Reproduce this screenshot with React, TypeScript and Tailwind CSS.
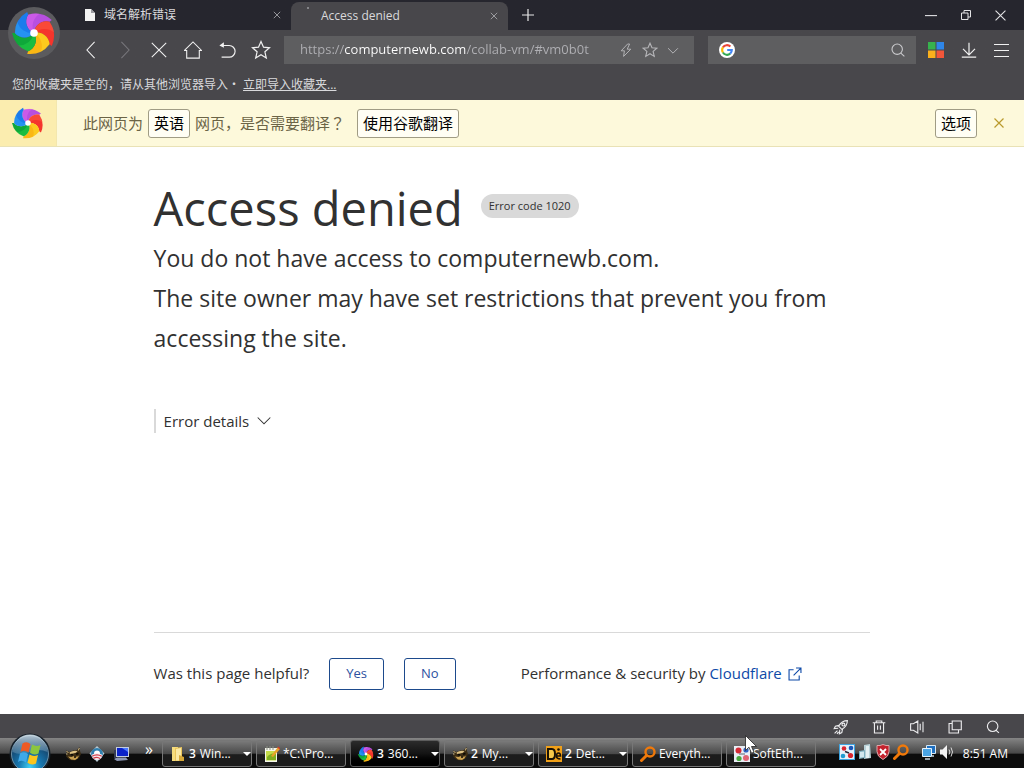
import { useState, type ReactNode } from "react";

const BLADES = [
  { angle: -108, color: "#b84fe0", light: "#ea6cf5" },
  { angle: -36, color: "#f5352c", light: "#ff6a4a" },
  { angle: 36, color: "#fab714", light: "#ffe62e" },
  { angle: 108, color: "#0fa83a", light: "#2bdc4a" },
  { angle: 180, color: "#1a7cec", light: "#38b4fa" },
];

function rim(angle: number, radius = 22) {
  const a = (angle * Math.PI) / 180;
  return `${(Math.cos(a) * radius).toFixed(2)} ${(Math.sin(a) * radius).toFixed(2)}`;
}

function Pinwheel({ className }: { className: string }) {
  return (
    <svg viewBox="-23 -23 46 46" className={className} aria-hidden="true">
      {BLADES.map((b) => (
        <g key={b.angle}>
          <path
            fill={b.color}
            d={`M0 0A13 13 0 0 1 ${rim(b.angle, 20)}A26 26 0 0 1 ${rim(b.angle + 72, 23)}L${rim(b.angle + 72, 20)}A13 13 0 0 0 0 0Z`}
          />
          <path
            fill={b.light}
            opacity="0.4"
            d={`M0 0A13 13 0 0 1 ${rim(b.angle, 20)}A26 26 0 0 1 ${rim(b.angle + 34, 21)}A16 16 0 0 0 0 0Z`}
          />
        </g>
      ))}
      <circle r="4" fill="#fff" />
    </svg>
  );
}

function Line({
  d,
  className = "size-[18px]",
  width = 1.2,
  children,
}: {
  d: string;
  className?: string;
  width?: number;
  children?: ReactNode;
}) {
  return (
    <svg
      viewBox="0 0 20 20"
      className={className}
      fill="none"
      stroke="currentColor"
      strokeWidth={width}
      aria-hidden="true"
    >
      <path d={d} />
      {children}
    </svg>
  );
}

const STAR = "M10 1.5l2.5 5.7 6 .6-4.6 4 1.4 6.2-5.3-3.3L4.7 18l1.4-6.2-4.6-4 6-.6z";
const CROSS = "M2 2l16 16M18 2l-16 16";

function GoogleG() {
  return (
    <svg viewBox="0 0 16 16" className="size-4 shrink-0" aria-hidden="true">
      <circle cx="8" cy="8" r="8" fill="#fff" />
      <g fill="none" strokeWidth="2.1">
        <path d="M3.9 5.4A4.8 4.8 0 0 1 11.4 4.6" stroke="#ea4335" />
        <path d="M3.9 10.5A4.8 4.8 0 0 1 3.9 5.4" stroke="#fbbc05" />
        <path d="M11.2 11.6A4.8 4.8 0 0 1 3.9 10.5" stroke="#34a853" />
        <path d="M8.2 8H12.8A4.8 4.8 0 0 1 11.2 11.6" stroke="#4285f4" />
      </g>
    </svg>
  );
}

function Raccoon() {
  return (
    <svg viewBox="0 0 16 16" className="size-4 shrink-0" aria-hidden="true">
      <path d="M1 4.500l3.500 1.500 4-1.500 3.500-.5L14.500 1l.5 4 1 3-2 4-4 2.500-5-.5-3-2.500L1 10l1-2z" fill="#3b2c14" />
      <path d="M4.500 6.500Q8 4 12.500 5l-1.500 1.800-3 .7-3 .8z" fill="#dcc184" />
      <path d="M3 10.500l3.500.5L9 10l3 .8 2-1.300-1.500 3L10 14l-4-.5z" fill="#c9a050" />
      <path d="M5.500 8.500l2.500.3M11 8.300l2.500-.8" stroke="#0c0904" strokeWidth="1.700" />
      <path d="M1.500 5l2 2M14.300 2l-1 2.500M1 8h1.500" stroke="#e6cf97" strokeWidth="0.900" />
      <circle cx="10" cy="11" r="1" fill="#0c0904" />
    </svg>
  );
}

function ShieldO() {
  return (
    <svg viewBox="0 0 16 16" className="size-4 shrink-0" aria-hidden="true">
      <path d="M8 0l7.5 7.5L8 16 .5 7.5z" fill="#b9cbd6" />
      <circle cx="8" cy="8" r="6" fill="#2f7fae" />
      <circle cx="8" cy="7.4" r="3" fill="#fff" />
      <path d="M2.300 9Q8 5.500 13.700 9 12.500 14 8 14T2.300 9" fill="#f8ecec" />
      <path d="M3 10.300q5-3 9.800 0M4.300 12.400q4-2.200 7 .4" fill="none" stroke="#cf3d4b" strokeWidth="1.200" />
    </svg>
  );
}

function BlueScreen() {
  return (
    <svg viewBox="0 0 16 16" className="size-4 shrink-0" aria-hidden="true">
      <path d="M3 1h13v10H3z" fill="#c3cce0" />
      <path d="M4 2h11v8H4z" fill="#0a22c8" />
      <path d="M9 2h6v4z" fill="#4a78ff" />
      <path d="M1 13l3-1.500h9l2 2.500-11 1z" fill="#8b96b4" />
      <path d="M1 4h2v8H1z" fill="#343b52" />
    </svg>
  );
}

function FolderIcon() {
  return (
    <svg viewBox="0 0 16 16" className="size-4 shrink-0" aria-hidden="true">
      <path d="M2 1h6v14H2z" fill="#f6dc7d" />
      <path d="M5 2l7-1v14H5z" fill="#e9c45a" />
      <path d="M6 3l5-1v12.500H6z" fill="#fbe9a4" />
      <path d="M9 9l5 2v4H9z" fill="#d7a93a" />
    </svg>
  );
}

function Notepad() {
  return (
    <svg viewBox="0 0 16 16" className="size-4 shrink-0" aria-hidden="true">
      <path d="M1 2h12v14H1z" fill="#f4f6ec" />
      <path d="M2 5h10v9.500H2z" fill="#c4dc4a" />
      <path d="M3 11q4-5 9-3v6H3z" fill="#7fae22" />
      <path d="M3 0v4M6 0v4M9 0v4" stroke="#8a8f83" />
      <path d="M7 10l7-9 2 2-7 8z" fill="#e8a22a" />
      <path d="M14 1l2 2" stroke="#d0392b" strokeWidth="1.500" />
    </svg>
  );
}

function DetectIcon() {
  return (
    <svg viewBox="0 0 16 16" className="size-4 shrink-0" aria-hidden="true">
      <path d="M0 0h16v16H0z" fill="#f0a018" />
      <path d="M2 3h4q3 0 3 5t-3 5H2z" fill="#f7c94b" stroke="#1a1205" strokeWidth="2" />
      <path d="M10 10h4.500q0-3-2-3t-2 3q0 3 4 3" fill="none" stroke="#1a1205" strokeWidth="1.600" />
      <circle cx="12.500" cy="3.500" r="1.300" fill="#1a1205" />
    </svg>
  );
}

function OrangeSearch() {
  return (
    <svg viewBox="0 0 16 16" className="size-4 shrink-0" fill="none" stroke="#f0790a" aria-hidden="true">
      <circle cx="10" cy="6" r="4.500" strokeWidth="2.400" />
      <path d="M6.500 9.500L1.500 14.500" strokeWidth="3" strokeLinecap="round" />
    </svg>
  );
}

function SoftEther() {
  return (
    <svg viewBox="0 0 16 16" className="size-4 shrink-0" aria-hidden="true">
      <path d="M0 0h16v16H0z" fill="#e9eef5" />
      <circle cx="4.500" cy="4.500" r="3" fill="#d42a35" />
      <circle cx="12" cy="4" r="2.600" fill="#2f62c4" />
      <circle cx="5" cy="12.500" r="2.600" fill="#47a83c" />
      <circle cx="12" cy="12" r="3" fill="#e06474" />
      <path d="M5 8h6" stroke="#5b6473" />
    </svg>
  );
}

function SoftEtherTray() {
  return (
    <svg viewBox="0 0 16 16" className="size-4 shrink-0" aria-hidden="true">
      <path d="M0 0h16v16H0z" fill="#3fa4e0" />
      <path d="M1 1h14v14H1z" fill="#e4f0fa" />
      <circle cx="5" cy="4.500" r="2.300" fill="#d9252f" />
      <circle cx="12" cy="4" r="2.300" fill="#1b57b8" />
      <circle cx="4" cy="12" r="2.300" fill="#1e9ad0" />
      <circle cx="11.500" cy="11.500" r="2.600" fill="#d9252f" />
      <path d="M6 7.500l4 1.500" stroke="#223" strokeWidth="1.500" />
    </svg>
  );
}

function ServerTray() {
  return (
    <svg viewBox="0 0 16 16" className="size-4 shrink-0" aria-hidden="true">
      <path d="M7 1l6-1 1 14-7 1z" fill="#b9d2d8" />
      <path d="M9 2h3v12H9z" fill="#e6f1f3" />
      <path d="M2 7l6-1v8l-6 1z" fill="#7fb0c0" />
      <path d="M3 8l4-.5V13l-4 .8z" fill="#d3e8ee" />
    </svg>
  );
}

function ShieldX() {
  return (
    <svg viewBox="0 0 16 16" className="size-4 shrink-0" aria-hidden="true">
      <path d="M8 .5q3 1.500 6 1v6q0 5-6 8-6-3-6-8v-6q3 .5 6-1z" fill="#c4222d" stroke="#dca8aa" />
      <path d="M5 5l6 6M11 5l-6 6" stroke="#fff" strokeWidth="1.800" />
    </svg>
  );
}

function NetworkTray() {
  return (
    <svg viewBox="0 0 16 16" className="size-4 shrink-0" aria-hidden="true">
      <path d="M5.500 1.500h9v8h-9z" fill="#1e6fc0" stroke="#d7e8f5" />
      <path d="M1.500 4.500h9v8h-9z" fill="#4aa5e6" stroke="#e6f2fb" />
      <path d="M4 15h5M12 11v2" stroke="#c3d3df" strokeWidth="1.500" />
    </svg>
  );
}

function VolumeTray() {
  return (
    <svg viewBox="0 0 16 16" className="size-4 shrink-0" aria-hidden="true">
      <path d="M1 5.500h2.500L8 1v14l-4.500-4.500H1z" fill="#f2f2f2" />
      <path d="M10 5.500q1.800 2.500 0 5M12 3.500q3 4.500 0 9" fill="none" stroke="#ddd" />
    </svg>
  );
}

function StartOrb() {
  return (
    <svg viewBox="0 0 42 42" className="size-[42px] shrink-0" aria-hidden="true">
      <defs>
        <radialGradient id="orb" cx="50%" cy="85%" r="75%">
          <stop offset="0" stopColor="#3fd0f5" />
          <stop offset="0.4" stopColor="#1878b0" />
          <stop offset="1" stopColor="#14375a" />
        </radialGradient>
        <linearGradient id="gloss" x1="0" y1="0" x2="0" y2="1">
          <stop offset="0" stopColor="#e6f1f7" stopOpacity="0.8" />
          <stop offset="1" stopColor="#8fb4cc" stopOpacity="0.3" />
        </linearGradient>
      </defs>
      <circle cx="21" cy="21" r="20.500" fill="#16202a" />
      <circle cx="21" cy="21" r="18.500" fill="url(#orb)" stroke="#7fa6bd" strokeWidth="0.800" />
      <path d="M3.500 19a17.500 17.500 0 0 1 35 0q-9-4-18 0t-17 0z" fill="url(#gloss)" />
      <path d="M13.500 10.500q4.500-2.500 8 .5l-2 8.500q-4-3-8-.5z" fill="#ee5a24" />
      <path d="M23 11.500q4 2.500 8.500.5l-2 8.500q-4.500 2.200-8.500-.7z" fill="#8cc63f" />
      <path d="M11 20.500q4.500-2.500 8 .5l-2 8.500q-4-3-8-.5z" fill="#3fa9ea" />
      <path d="M20.500 21.500q4 2.500 8.500.5l-2 8.500q-4.500 2.200-8.500-.7z" fill="#fcc51c" />
    </svg>
  );
}

type Task = { icon: ReactNode; count?: string; label: string; menu?: boolean; active?: boolean };

const TASKS: Task[] = [
  { icon: <FolderIcon />, count: "3", label: "Win...", menu: true },
  { icon: <Notepad />, label: "*C:\\Pro..." },
  { icon: <Pinwheel className="size-4 shrink-0" />, count: "3", label: "360...", menu: true, active: true },
  { icon: <Raccoon />, count: "2", label: "My...", menu: true },
  { icon: <DetectIcon />, count: "2", label: "Det...", menu: true },
  { icon: <OrangeSearch />, label: "Everyth..." },
  { icon: <SoftEther />, label: "SoftEth..." },
];

function TaskButton({ task }: { task: Task }) {
  return (
    <button
      className={
        "flex h-[27px] w-[90px] shrink-0 items-center gap-[3px] rounded-[3px] border pl-[7px] text-left text-[12px] text-white " +
        (task.active
          ? "border-[#5c5c5c] bg-linear-to-b from-[#2c2c2c] via-[#141414] to-black"
          : "border-[#777] bg-linear-to-b from-[#7a7a7a] from-0% via-[#4a4a4a] via-50% to-[#1c1c1c] to-55%")
      }
    >
      {task.icon}
      <span className="flex flex-1 gap-1 whitespace-nowrap">
        {task.count && <b className="font-semibold">{task.count}</b>}
        <span>{task.label}</span>
      </span>
      {task.menu && (
        <svg viewBox="0 0 8 4" className="h-1 w-2 shrink-0" fill="#fff" aria-hidden="true">
          <path d="M0 0h8L4 4z" />
        </svg>
      )}
    </button>
  );
}

function Header() {
  const [url, setUrl] = useState("https://computernewb.com/collab-vm/#vm0b0t");
  const navButton = "flex w-[34px] justify-center text-[#f1f1f1]";
  return (
    <header className="bg-[#48474b] text-[#d9d9dc]">
      <div className="flex bg-linear-to-b from-[#26262e] from-[30px] to-[#48474b] to-[30px]">
        <div className="flex w-[72px] shrink-0 items-start pt-[7px] pl-2">
          <button aria-label="360 account" className="rounded-full bg-[#5b5b5e] p-1">
            <Pinwheel className="size-11" />
          </button>
        </div>
        <div className="min-w-0 flex-1">
          <div className="flex h-[30px] items-center text-[12px]">
            <div className="flex h-full w-[219px] items-center pl-3">
              <svg viewBox="0 0 12 14" className="h-3.5 w-3" aria-hidden="true">
                <path d="M1 1h6l4 4v8H1z" fill="#f2f2f2" />
                <path d="M7 1v4h4z" fill="#9a9aa0" />
              </svg>
              <span className="flex-1 pl-2">域名解析错误</span>
              <button aria-label="Close 域名解析错误" className="mr-2.5 text-[#9a9a9f]">
                <Line d={CROSS} className="size-2" width={2.4} />
              </button>
            </div>
            <div className="flex h-[28px] w-[217px] items-center self-end rounded-t-lg bg-[#48474b]">
              <span className="mb-4 ml-4 size-0.5 rounded-full bg-[#99999c]" />
              <span className="flex-1 pl-3">Access denied</span>
              <button aria-label="Close Access denied" className="mr-2.5 text-[#9f9fa3]">
                <Line d={CROSS} className="size-2" width={2.4} />
              </button>
            </div>
            <button aria-label="New tab" className="ml-3.5 text-[#e8e8e8]">
              <Line d="M10 0v20M0 10h20" className="size-3" width={2} />
            </button>
            <div className="mr-[18px] ml-auto flex items-center gap-6 text-[#e4e4e6]">
              <button aria-label="Minimize">
                <Line d="M0 11h20" className="size-3" width={1.8} />
              </button>
              <button aria-label="Restore">
                <Line d="M1 6h13v13H1zM6 6V1h13v13h-5" className="size-2.5" width={2} />
              </button>
              <button aria-label="Close">
                <Line d="M1 1l18 18M19 1L1 19" className="size-[11px]" width={2} />
              </button>
            </div>
          </div>
          <div className="flex h-10 items-center pl-0.5">
            <button aria-label="Back" className={navButton}>
              <Line d="M14 1L5.500 10l8.500 9" />
            </button>
            <button aria-label="Forward" className="flex w-[34px] justify-center text-[#77767b]">
              <Line d="M6 1l8.500 9L6 19" />
            </button>
            <button aria-label="Stop" className={navButton}>
              <Line d={CROSS} />
            </button>
            <button aria-label="Home" className={navButton}>
              <Line d="M.5 10.500L10 1l9.500 9.500H17V19H3v-8.500z" />
            </button>
            <button aria-label="Undo" className={navButton}>
              <Line d="M4 18h8.500a6.500 6.500 0 0 0 0-13H3" width={1.3}>
                <path d="M6.500 1.500L1.500 5l5 2.500z" fill="currentColor" stroke="none" />
              </Line>
            </button>
            <button aria-label="Favourite" className={navButton}>
              <Line d={STAR} className="size-5" />
            </button>
            <div className="ml-1.5 flex h-7 min-w-0 flex-1 items-center gap-2 bg-[#5e5e60] pr-3.5 pl-4 text-[#b5b5b8]">
              <input
                aria-label="Address"
                value={url}
                onChange={(e) => setUrl(e.target.value)}
                className="min-w-0 flex-1 bg-[linear-gradient(to_right,#b0b0b4_44px,#fff_44px,#fff_166px,#b0b0b4_166px)] bg-clip-text text-[13px] text-transparent caret-white outline-none"
              />
              <button aria-label="Speed mode">
                <Line d="M12 2.500L4 11h4l-1 7 9-9h-4.500l3-6.500z" className="size-4" />
              </button>
              <button aria-label="Add to favourites">
                <Line d={STAR} className="size-4" width={1.4} />
              </button>
              <button aria-label="Address history">
                <Line d="M3 7.500l7 7 7-7" className="size-3.5" width={1.4} />
              </button>
            </div>
            <div className="ml-3.5 flex h-7 w-[208px] items-center bg-[#5e5e60] pr-2.5 pl-[11px]">
              <GoogleG />
              <input aria-label="Search" className="min-w-0 flex-1 px-2 text-[13px] outline-none" />
              <button aria-label="Search the web" className="text-[#c9c9cc]">
                <Line d="M13.500 14L18 18" className="size-4" width={1.4}>
                  <circle cx="9" cy="9" r="6.500" />
                </Line>
              </button>
            </div>
            <div className="mr-[15px] ml-3 flex items-center gap-[17px] text-[#f1f1f1]">
              <button aria-label="Apps">
                <svg viewBox="0 0 16 16" className="size-4" aria-hidden="true">
                  <path d="M0 0h7.500v7.500H0z" fill="#37b24d" />
                  <path d="M8.500 0H16v7.500H8.500z" fill="#2f86e8" />
                  <path d="M0 8.500h7.500V16H0z" fill="#fbb01c" />
                  <path d="M8.500 8.500H16V16H8.500z" fill="#f2563a" />
                </svg>
              </button>
              <button aria-label="Downloads">
                <Line d="M10 1v14M2.500 8.500L10 16l7.500-7.500M1 19h18" className="size-4" width={1.5} />
              </button>
              <button aria-label="Menu">
                <Line d="M0 2h20M0 10h20M0 18h20" className="size-[15px]" width={1.5} />
              </button>
            </div>
          </div>
        </div>
      </div>
      <div className="flex h-[30px] items-center gap-[3px] px-3 text-[12px]">
        <span>您的收藏夹是空的，请从其他浏览器导入・</span>
        <a href="#import" className="underline">
          立即导入收藏夹...
        </a>
      </div>
    </header>
  );
}

function TranslateBar() {
  const button = "h-[29px] rounded-[3px] border border-[#a09c84] bg-[#fffef4] px-[5px] text-black";
  return (
    <section className="flex h-[47px] items-center border-b border-[#e9e2b6] bg-[#fdf9db] text-[15px] text-[#6b6446]">
      <div className="flex h-full w-[57px] items-center justify-center border-r border-[#f3e7ae] bg-[#fbedaf]">
        <Pinwheel className="size-8" />
      </div>
      <div className="flex flex-1 items-center gap-[5px] pl-[26px]">
        <span>此网页为</span>
        <button className={button}>英语</button>
        <span>
          网页，是否需要翻译<span className="font-['Noto_Sans_CJK_TC',sans-serif]">？</span>
        </span>
        <button className={button + " ml-[7px]"}>使用谷歌翻译</button>
      </div>
      <button className={button}>选项</button>
      <button aria-label="Dismiss" className="mr-5 ml-[17px] text-[#b99a2c]">
        <Line d="M1 1l18 18M19 1L1 19" className="size-2.5" width={2.4} />
      </button>
    </section>
  );
}

function ErrorPage() {
  const choice = "h-8 rounded-[3px] border border-[#1d4a8c] px-4 text-[13px] text-[#2c50a0]";
  return (
    <main className="mx-auto flex w-[70%] flex-1 flex-col text-[#313131]">
      <div className="flex items-center gap-[18px] pt-[31px]">
        <h1 className="text-[47px] leading-[60px] font-medium">Access denied</h1>
        <span className="mb-1 flex h-6 items-center rounded-full bg-[#d9d9d9] px-2 text-[11px]">
          Error code 1020
        </span>
      </div>
      <p className="text-[23px] leading-10">
        You do not have access to computernewb.com.
        <br />
        The site owner may have set restrictions that prevent you from accessing the site.
      </p>
      <button className="mt-[51px] flex h-6 items-center gap-2 self-start border-l-2 border-[#d9d9d9] pl-2 text-[15px]">
        Error details
        <Line d="M1 5l9 9 9-9" className="size-3.5" width={1.5} />
      </button>
      <footer className="mt-auto flex h-[82px] items-center border-t border-[#d9d9d9] text-[15px]">
        <span>Was this page helpful?</span>
        <button className={choice + " ml-5"}>Yes</button>
        <button className={choice + " ml-5"}>No</button>
        <span className="ml-[65px]">
          Performance &amp; security by{" "}
          <a href="https://www.cloudflare.com" className="inline-flex items-center gap-1.5 text-[#0e4aa8]">
            Cloudflare
            <Line d="M8 4H1.500v14.500H16V12M11.500 1.500h7v7M18 2L8 12" className="size-3.5" width={1.6} />
          </a>
        </span>
      </footer>
    </main>
  );
}

function StatusBar() {
  const icon = "flex w-[38px] justify-center";
  return (
    <div className="flex h-6 items-center justify-end bg-[#48474b] pt-0.5 pr-3 text-[#ececee]">
      <button aria-label="Boost" className={icon}>
        <Line
          d="M18 2q-7 0-11 7l4 4q7-4 7-11zM7.500 8L3 9l-1.500 3 5-.5M12 12.500L11 17l-3 1.500.5-5M5.500 14.500L2 18M7 16l-2 2.500"
          className="size-4"
          width={1.4}
        >
          <circle cx="13" cy="7" r="1.800" />
        </Line>
      </button>
      <button aria-label="Clear" className={icon}>
        <Line d="M1 4h18M6 4V1.500h8V4M3.500 4v14.500h13V4M8 8v6M12 8v6" className="size-3.5" width={1.6} />
      </button>
      <button aria-label="Sound" className={icon}>
        <Line d="M2 6h3.500L11 2.500v15L5.500 14H2zM14 6v8M17.500 3.500v13" className="size-4" width={1.4} />
      </button>
      <button aria-label="Window" className={icon}>
        <Line d="M6 1.500h13V14H6zM6 5H1.500v13.500H15V14" className="size-3.5" width={1.6} />
      </button>
      <button aria-label="Zoom" className={icon}>
        <Line d="M14 14.500l4.500 4" className="size-3.5" width={1.6}>
          <circle cx="9.500" cy="9" r="7.500" />
        </Line>
      </button>
    </div>
  );
}

function Taskbar() {
  return (
    <nav
      aria-label="Taskbar"
      className="flex h-[30px] items-center bg-linear-to-b from-[#858585] from-0% via-[#484848] via-50% to-[#0c0c0c] to-55% pt-px text-[12px] text-white"
    >
      <button aria-label="Start" className="ml-[9px] h-[35px] shrink-0 self-end overflow-hidden">
        <StartOrb />
      </button>
      <div className="ml-3.5 flex items-center gap-2">
        <button aria-label="Raccoon">
          <Raccoon />
        </button>
        <button aria-label="Shield">
          <ShieldO />
        </button>
        <button aria-label="Desktop">
          <BlueScreen />
        </button>
      </div>
      <button className="mb-2.5 ml-4 text-[16px] leading-4" aria-label="More shortcuts">
        »
      </button>
      <div className="ml-[9px] flex gap-1">
        {TASKS.map((t) => (
          <TaskButton key={t.label} task={t} />
        ))}
      </div>
      <div className="mr-4 mb-1 ml-auto flex items-center gap-[2px]">
        <SoftEtherTray />
        <ServerTray />
        <ShieldX />
        <OrangeSearch />
        <span className="w-2" />
        <NetworkTray />
        <VolumeTray />
        <span className="pt-1 pl-1.5 whitespace-nowrap">8:51 AM</span>
      </div>
    </nav>
  );
}

export default function App() {
  return (
    <div className="relative flex min-h-screen flex-col bg-white font-['Open_Sans','Noto_Sans_CJK_SC',sans-serif]">
      <Header />
      <TranslateBar />
      <ErrorPage />
      <StatusBar />
      <Taskbar />
      <svg viewBox="0 0 12 19" className="absolute bottom-3.5 left-[745px] h-[19px] w-3" aria-hidden="true">
        <path d="M.5.5v15l3.500-3.300 2.500 6 2.500-1-2.500-5.700h5z" fill="#fff" stroke="#222" strokeWidth="0.800" />
      </svg>
    </div>
  );
}
